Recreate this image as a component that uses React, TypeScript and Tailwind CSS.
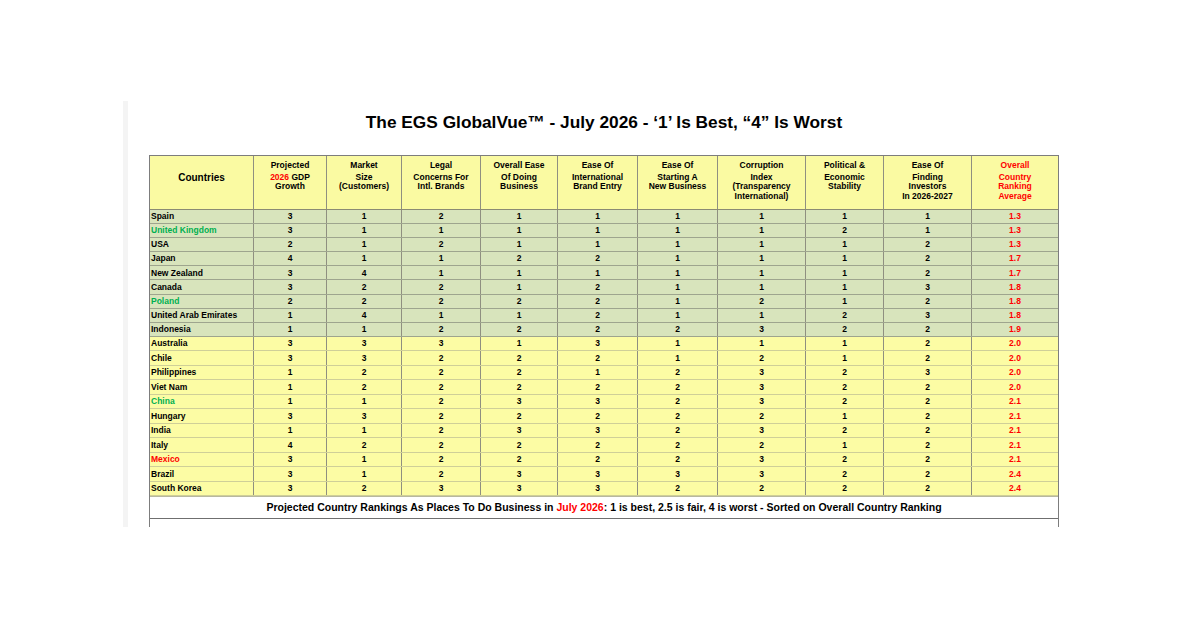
import React from "react";

type Row = { name: string; color?: "green" | "red"; v: number[]; avg: string };

const rows: Row[] = [
  { name: "Spain", v: [3, 1, 2, 1, 1, 1, 1, 1, 1], avg: "1.3" },
  { name: "United Kingdom", color: "green", v: [3, 1, 1, 1, 1, 1, 1, 2, 1], avg: "1.3" },
  { name: "USA", v: [2, 1, 2, 1, 1, 1, 1, 1, 2], avg: "1.3" },
  { name: "Japan", v: [4, 1, 1, 2, 2, 1, 1, 1, 2], avg: "1.7" },
  { name: "New Zealand", v: [3, 4, 1, 1, 1, 1, 1, 1, 2], avg: "1.7" },
  { name: "Canada", v: [3, 2, 2, 1, 2, 1, 1, 1, 3], avg: "1.8" },
  { name: "Poland", color: "green", v: [2, 2, 2, 2, 2, 1, 2, 1, 2], avg: "1.8" },
  { name: "United Arab Emirates", v: [1, 4, 1, 1, 2, 1, 1, 2, 3], avg: "1.8" },
  { name: "Indonesia", v: [1, 1, 2, 2, 2, 2, 3, 2, 2], avg: "1.9" },
  { name: "Australia", v: [3, 3, 3, 1, 3, 1, 1, 1, 2], avg: "2.0" },
  { name: "Chile", v: [3, 3, 2, 2, 2, 1, 2, 1, 2], avg: "2.0" },
  { name: "Philippines", v: [1, 2, 2, 2, 1, 2, 3, 2, 3], avg: "2.0" },
  { name: "Viet Nam", v: [1, 2, 2, 2, 2, 2, 3, 2, 2], avg: "2.0" },
  { name: "China", color: "green", v: [1, 1, 2, 3, 3, 2, 3, 2, 2], avg: "2.1" },
  { name: "Hungary", v: [3, 3, 2, 2, 2, 2, 2, 1, 2], avg: "2.1" },
  { name: "India", v: [1, 1, 2, 3, 3, 2, 3, 2, 2], avg: "2.1" },
  { name: "Italy", v: [4, 2, 2, 2, 2, 2, 2, 1, 2], avg: "2.1" },
  { name: "Mexico", color: "red", v: [3, 1, 2, 2, 2, 2, 3, 2, 2], avg: "2.1" },
  { name: "Brazil", v: [3, 1, 2, 3, 3, 3, 3, 2, 2], avg: "2.4" },
  { name: "South Korea", v: [3, 2, 3, 3, 3, 2, 2, 2, 2], avg: "2.4" },
];

const GRID =
  "grid grid-cols-[104px_73px_75px_79px_77px_80px_80px_88px_78px_88px_86px]";

type Head = { first: React.ReactNode; rest: React.ReactNode[]; red?: boolean };

const heads: Head[] = [
  {
    first: "Projected",
    rest: [
      <span key="a">
        <span className="text-[#ff0000]">2026</span> GDP
      </span>,
      "Growth",
    ],
  },
  { first: "Market", rest: ["Size", "(Customers)"] },
  { first: "Legal", rest: ["Concerns For", "Intl. Brands"] },
  { first: "Overall Ease", rest: ["Of Doing", "Business"] },
  { first: "Ease Of", rest: ["International", "Brand Entry"] },
  { first: "Ease Of", rest: ["Starting A", "New Business"] },
  { first: "Corruption", rest: ["Index", "(Transparency", "International)"] },
  { first: "Political &", rest: ["Economic", "Stability"] },
  { first: "Ease Of", rest: ["Finding", "Investors", "In 2026-2027"] },
  { first: "Overall", rest: ["Country", "Ranking", "Average"], red: true },
];

export default function App() {
  return (
    <div className="w-[1200px] h-[630px] bg-white overflow-hidden font-['Liberation_Sans',Arial,sans-serif] text-black">
      <div className="flex pt-[101px] pl-[123px]">
        <div className="w-[5px] h-[426px] bg-[#f4f4f4]" />
        <div className="ml-[21px] w-[910px] h-[426px] overflow-hidden flex flex-col">
          <div className="mt-[11px] h-[20px] leading-[20px] text-center text-[17.3px] font-bold whitespace-nowrap">
            The EGS GlobalVue™ - July 2026 - ‘1’ Is Best, “4” Is Worst
          </div>
          <div className="mt-[23px] border border-[#7d7d7d] border-b-0">
            {/* header */}
            <div className={`${GRID} h-[54px] bg-[#fafaa2] border-b border-[#8a8a74]`}>
              <div className="border-r border-[#8f8f80] flex items-center justify-center text-[10px] font-bold pb-[11px]">
                Countries
              </div>
              {heads.map((h, i) => (
                <div
                  key={i}
                  className={`${i < heads.length - 1 ? "border-r border-[#8f8f80]" : ""} flex flex-col items-center pt-[4px] text-[8.5px] font-bold text-center ${h.red ? "text-[#ff0000]" : ""}`}
                >
                  <div className="leading-[10px]">{h.first}</div>
                  <div className="mt-[3px] flex flex-col items-center">
                    {h.rest.map((r, j) => (
                      <div key={j} className="leading-[9.4px] whitespace-nowrap">
                        {r}
                      </div>
                    ))}
                  </div>
                </div>
              ))}
            </div>
            {/* body */}
            {rows.map((r, idx) => {
              const green = idx < 9;
              return (
                <div
                  key={r.name}
                  className={`${GRID} ${green ? "h-[14.1px] bg-[#d8e4bc] border-[#9ea58e]" : "h-[14.5px] bg-[#fcfca4] border-[#cfcf98]"} ${idx === 8 ? "border-[#8a8f7c]" : ""} border-b text-[8.5px] font-bold`}
                >
                  <div
                    className={`border-r border-[#8f8f80] pl-[1px] flex items-center whitespace-nowrap ${r.color === "green" ? "text-[#00b050]" : r.color === "red" ? "text-[#ff0000]" : ""}`}
                  >
                    {r.name}
                  </div>
                  {r.v.map((n, j) => (
                    <div
                      key={j}
                      className="border-r border-[#8f8f80] flex items-center justify-center"
                    >
                      {n}
                    </div>
                  ))}
                  <div className="flex items-center justify-center text-[#ff0000]">{r.avg}</div>
                </div>
              );
            })}
            {/* footer */}
            <div className="h-[23px] bg-white border-t border-[#b8b8a0] border-b border-b-[#6f6f6f] flex items-center justify-center text-[10.5px] font-bold whitespace-nowrap">
              <span>
                Projected Country Rankings As Places To Do Business in{" "}
                <span className="text-[#ff0000]">July 2026</span>: 1 is best, 2.5 is fair, 4 is
                worst - Sorted on Overall Country Ranking
              </span>
            </div>
            <div className="h-[40px] bg-white" />
          </div>
        </div>
      </div>
    </div>
  );
}
